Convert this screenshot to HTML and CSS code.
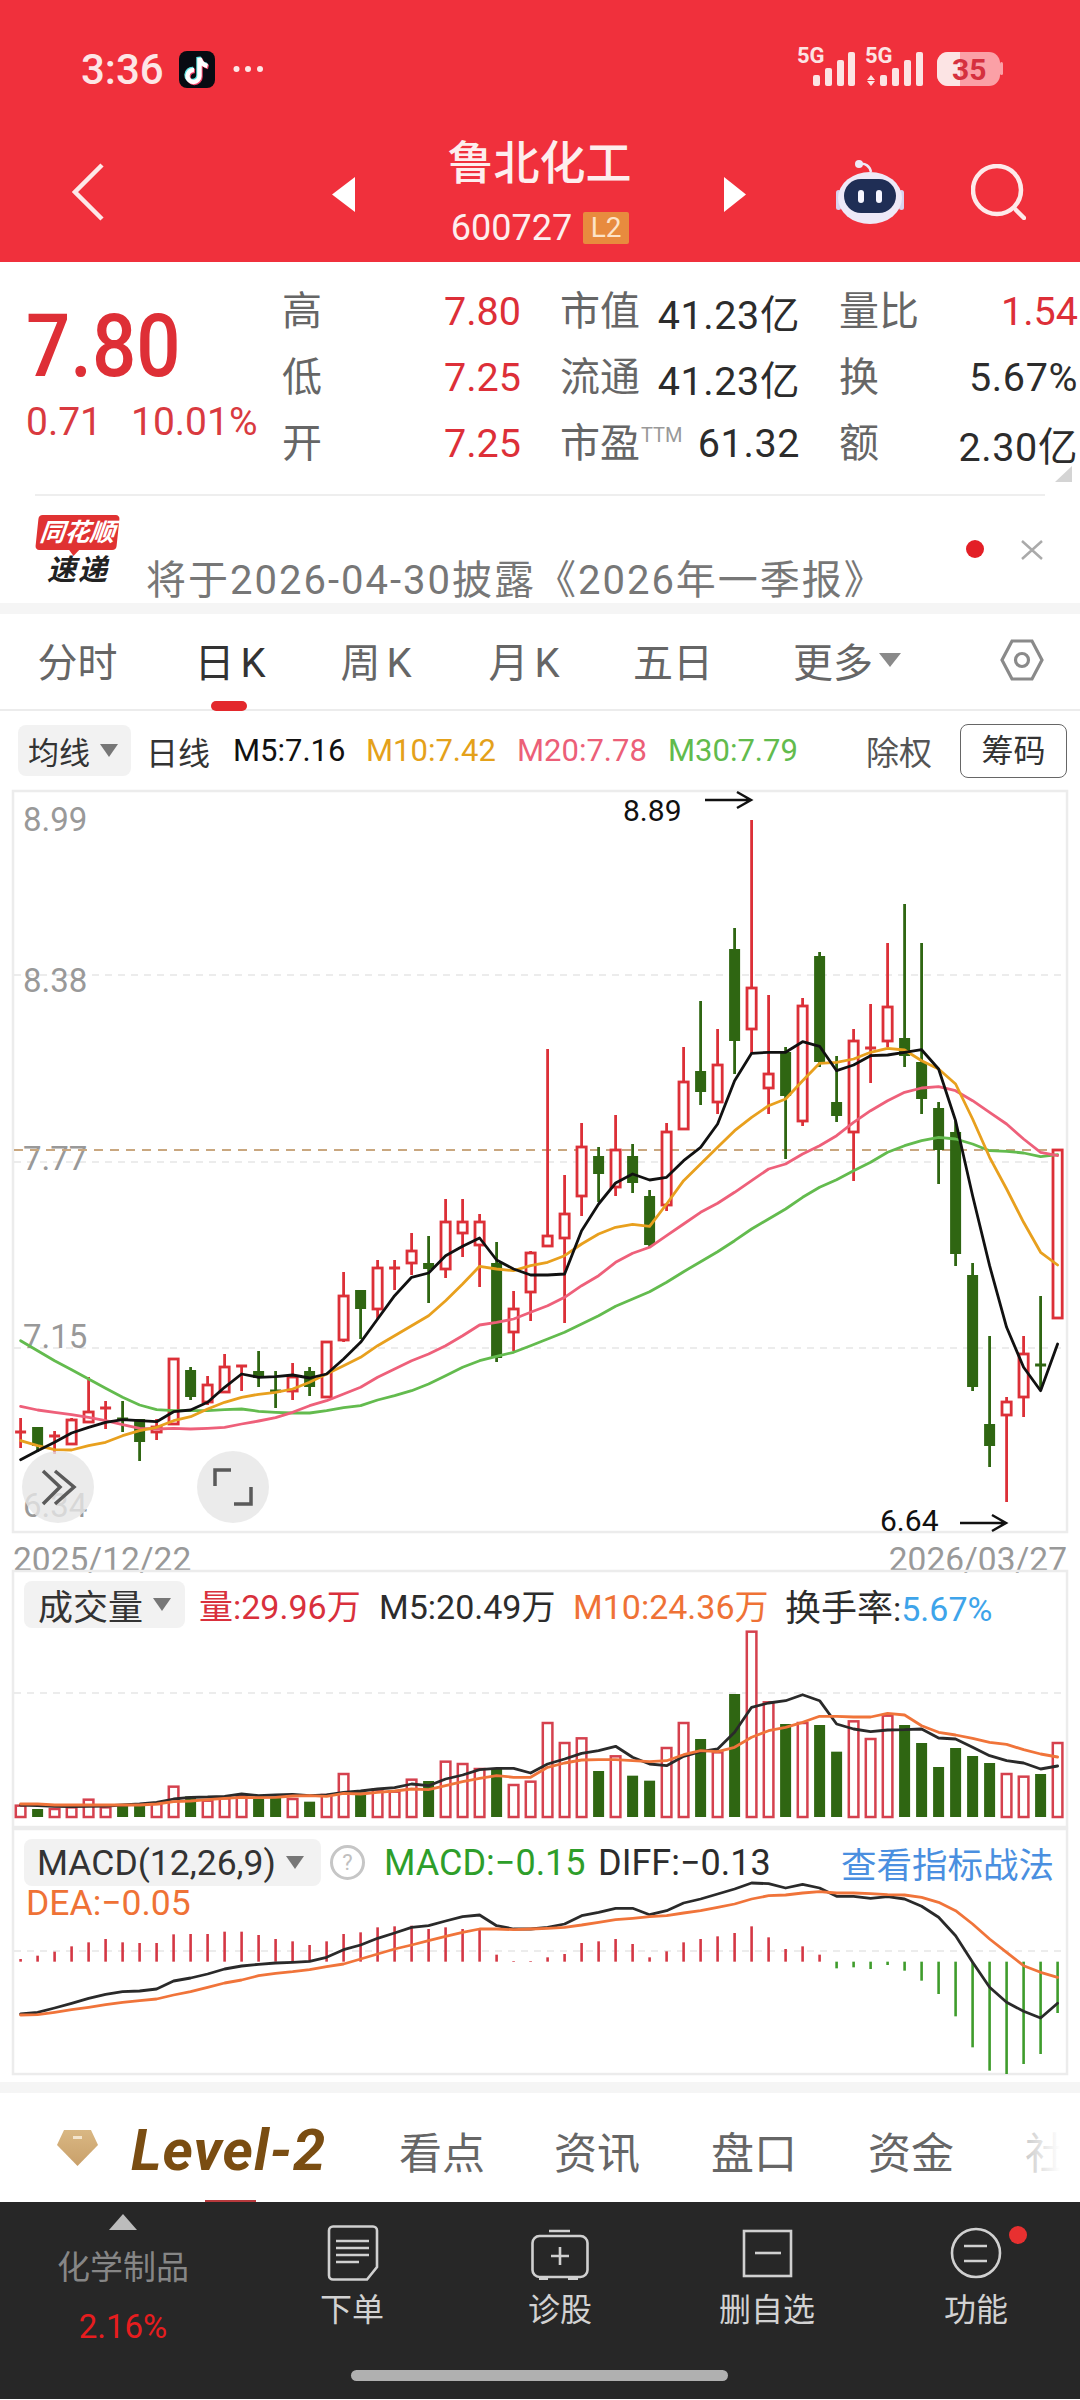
FILE: index.html
```html
<!DOCTYPE html>
<html lang="zh">
<head>
<meta charset="utf-8">
<title>鲁北化工</title>
<link rel="stylesheet" href="styles.css">
</head>
<body>
<div class="app">
  <header class="header">
    <div class="status">
      <span class="clock">3:36</span>
      <svg class="tiktok" viewBox="0 0 36 37">
        <rect width="36" height="37" rx="8" class="tt-bg"/>
        <path class="tt-c" d="M14 18a6 6 0 1 0 5.5 6V6c1 4 4 7 8 8"/>
        <path class="tt-r" d="M16 20a6 6 0 1 0 5.5 6V8c1 4 4 7 8 8"/>
        <path class="tt-w" d="M15 19a6 6 0 1 0 5.5 6V7c1 4 4 7 8 8"/>
      </svg>
      <svg class="dots" viewBox="0 0 30 8"><circle cx="3.5" cy="4" r="3"/><circle cx="15" cy="4" r="3"/><circle cx="27" cy="4" r="3"/></svg>
      <svg class="sysicons" viewBox="0 -8 208 57">
        <text x="0" y="16" class="net">5G</text>
        <rect x="16" y="28" width="7" height="11" rx="2"/><rect x="28" y="21" width="7" height="18" rx="2"/><rect x="40" y="13" width="7" height="26" rx="2"/><rect x="51" y="5" width="7" height="34" rx="2"/>
        <text x="68" y="16" class="net">5G</text>
        <path d="M74 28l4 5h-8zM74 39l4-5h-8z"/>
        <rect x="83" y="28" width="7" height="11" rx="2"/><rect x="95" y="21" width="7" height="18" rx="2"/><rect x="107" y="13" width="7" height="26" rx="2"/><rect x="119" y="5" width="7" height="34" rx="2"/>
        <rect x="140" y="5" width="63" height="34" rx="11" class="bat-rest"/>
        <path d="M151 5h12v34h-12a11 11 0 0 1-11-11V16a11 11 0 0 1 11-11z"/>
        <rect x="203" y="15" width="3" height="13" rx="1.5" class="bat-rest"/>
        <text x="155" y="33" class="bat-num">35</text>
      </svg>
    </div>
    <div class="nav">
      <svg class="back" viewBox="0 0 33 58"><polyline points="30,2 3,29 30,56"/></svg>
      <svg class="tri-l" viewBox="0 0 23 35"><polygon points="23,0 23,35 0,17.5"/></svg>
      <div class="title">
        <div class="name">鲁北化工</div>
        <div class="code"><span>600727</span><span class="l2">L2</span></div>
      </div>
      <svg class="tri-r" viewBox="0 0 22 35"><polygon points="0,0 22,17.5 0,35"/></svg>
      <svg class="robot" viewBox="0 0 68 64">
        <path class="ant" d="M24 4c5-1 10 2 11 8"/>
        <circle cx="23" cy="4" r="4" class="head"/>
        <rect x="0" y="30" width="5" height="20" rx="2.5" class="ear"/>
        <rect x="63" y="30" width="5" height="20" rx="2.5" class="ear"/>
        <ellipse cx="34" cy="38" rx="32" ry="26" class="head"/>
        <rect x="8" y="19" width="52" height="34" rx="17" class="visor"/>
        <rect x="22" y="30" width="6" height="13" rx="3" class="eye"/>
        <rect x="40" y="30" width="6" height="13" rx="3" class="eye"/>
      </svg>
      <svg class="search" viewBox="0 0 55 56"><circle cx="26" cy="26" r="24"/><line x1="45" y1="46" x2="53" y2="54"/></svg>
    </div>
  </header>

  <section class="quote">
    <div class="price">
      <div class="big">7.80</div>
      <div class="chg"><span class="chg-a">0.71</span><span>10.01%</span></div>
    </div>
    <div class="stats">
      <div class="cell"><span class="lab">高</span><span class="up">7.80</span></div>
      <div class="cell"><span class="lab">市值</span><span class="val">41.23亿</span></div>
      <div class="cell"><span class="lab">量比</span><span class="up">1.54</span></div>
      <div class="cell"><span class="lab">低</span><span class="up">7.25</span></div>
      <div class="cell"><span class="lab">流通</span><span class="val">41.23亿</span></div>
      <div class="cell"><span class="lab">换</span><span class="val">5.67%</span></div>
      <div class="cell"><span class="lab">开</span><span class="up">7.25</span></div>
      <div class="cell"><span class="lab">市盈<sup class="ttm">TTM</sup></span><span class="val">61.32</span></div>
      <div class="cell"><span class="lab">额</span><span class="val">2.30亿</span></div>
    </div>
    <i class="corner"></i>
  </section>

  <section class="ad">
    <div class="logo">
      <div class="bubble"><span>同花顺</span></div>
      <div class="sudi">速递</div>
    </div>
    <div class="ad-text">将于2026-04-30披露《2026年一季报》</div>
    <i class="ad-dot"></i>
    <svg class="ad-x" viewBox="0 0 22 20"><path d="M1 1l20 18M21 1L1 19"/></svg>
  </section>
  <div class="band"></div>

  <nav class="tabs">
    <span class="tab">分时</span>
    <span class="tab on">日 K</span>
    <span class="tab">周 K</span>
    <span class="tab">月 K</span>
    <span class="tab">五日</span>
    <span class="tab">更多<i class="caret caret-more"></i></span>
    <span class="tab tab-gear">
      <svg class="gear" viewBox="0 0 44 42"><polygon points="12,2 32,2 42,21 32,40 12,40 2,21"/><circle cx="22" cy="21" r="6.5"/></svg>
    </span>
  </nav>

  <div class="ma-row">
    <span class="pick pick-ma">均线<i class="caret"></i></span>
    <span class="ma w87 ma-d">日线</span>
    <span class="ma w133">M5:7.16</span>
    <span class="ma w151 c-or">M10:7.42</span>
    <span class="ma w152 c-pk">M20:7.78</span>
    <span class="ma m30 c-gr">M30:7.79</span>
    <span class="ma w94 ma-x">除权</span>
    <span class="chip">筹码</span>
  </div>

  <svg id="kline" class="chart kline" viewBox="0 791 1080 743"></svg>
  <div class="dates"><span>2025/12/22</span><span>2026/03/27</span></div>

  <section class="panel panel-vol">
    <svg id="vol" class="chart vol" viewBox="0 1571 1080 258"></svg>
    <div class="ph">
      <span class="pick pick-vol">成交量<i class="caret"></i></span>
      <span class="pi w180 c-rd">量:29.96万</span>
      <span class="pi w194">M5:20.49万</span>
      <span class="pi w213 c-om">M10:24.36万</span>
      <span class="pi"><span class="hsl">换手率</span>:<span class="c-bl">5.67%</span></span>
    </div>
  </section>

  <section class="panel panel-macd">
    <svg id="macd" class="chart macd" viewBox="0 1829 1080 247"></svg>
    <div class="ph">
      <span class="pick pick-macd">MACD(12,26,9)<i class="caret"></i></span>
      <span class="help">?</span>
      <span class="pi w214 c-dg ph-m">MACD:−0.15</span>
      <span class="pi ph-m">DIFF:−0.13</span>
      <span class="pi link">查看指标战法</span>
    </div>
    <div class="dea c-om">DEA:−0.05</div>
  </section>

  <div class="gap"></div>
  <div class="band band-2"></div>

  <nav class="tabs2">
    <svg class="gem" viewBox="0 0 41 36"><defs><linearGradient id="gemfill" x1="0" y1="0" x2="0" y2="1"><stop offset="0" stop-color="#d9b783"/><stop offset="1" stop-color="#c9a06a"/></linearGradient></defs><polygon points="7,0 34,0 41,15 20.5,36 0,15" fill="url(#gemfill)"/><rect x="16" y="6" width="9" height="3" class="gem-dash"/></svg>
    <span class="lv2">Level-2</span>
    <span class="t2 t2-a">看点</span>
    <span class="t2 t2-b">资讯</span>
    <span class="t2 t2-b">盘口</span>
    <span class="t2 t2-b">资金</span>
    <span class="t2 t2-c">社区</span>
    <i class="lv2-ind"></i>
    <i class="fade"></i>
  </nav>

  <footer class="bar">
    <div class="sector">
      <i class="sec-tri"></i>
      <div class="sec-name">化学制品</div>
      <div class="sec-pct">2.16%</div>
    </div>
    <div class="act">
      <svg class="act-ic" viewBox="0 0 64 56"><path d="M13 1.5H53a4 4 0 0 1 4 4V42L47 54.5H13a4 4 0 0 1-4-4V5.5a4 4 0 0 1 4-4Z"/><path d="M16 16H49M16 23H49M16 30H49M16 37H39"/></svg>
      <span class="act-t">下单</span>
    </div>
    <div class="act">
      <svg class="act-ic" viewBox="0 0 64 56"><rect x="4.5" y="11" width="55" height="41" rx="7"/><path d="M21 6H42M32 22V40M23 31H41"/><path class="act-fill" d="M11 52h9v3h-9zM40 52h10v3H40z"/></svg>
      <span class="act-t">诊股</span>
    </div>
    <div class="act">
      <svg class="act-ic" viewBox="0 0 64 56"><rect x="9" y="6" width="47" height="45"/><path d="M20 28H46"/></svg>
      <span class="act-t">删自选</span>
    </div>
    <div class="act">
      <svg class="act-ic" viewBox="0 0 64 56"><circle cx="32" cy="28" r="24"/><path d="M20 21H43M20 36H43"/></svg>
      <span class="act-t">功能</span>
      <i class="act-dot"></i>
    </div>
    <i class="home"></i>
  </footer>
</div>
<script src="chart.js"></script>
</body>
</html>
```
FILE: styles.css
```css
* { box-sizing: border-box; }
html, body { margin: 0; padding: 0; background: #fff; }
body { font-family: Roboto, "Noto Sans CJK SC", sans-serif; color: #333; }
.app { width: 1080px; height: 2400px; overflow: hidden; position: relative; }
i { display: block; font-style: normal; }
svg { display: block; flex: none; }

/* header */
.header { height: 262px; background: #f0303c; color: #fff; }
.status { height: 130px; display: flex; align-items: flex-start; padding: 39px 75px 0 81px; }
.clock { font-size: 42px; font-weight: 500; line-height: 48px; margin-top: 7px; color: #fde6e6; width: 98px; }
.tiktok { width: 36px; height: 37px; margin-top: 12px; }
.tt-bg { fill: #080b12; }
.tiktok path { fill: none; stroke-width: 4.4; }
.tt-c { stroke: #5fe6e6; }
.tt-r { stroke: #f2466a; }
.tt-w { stroke: #fff; }
.dots { width: 30px; height: 8px; margin: 26px 0 0 18px; fill: #fde6e6; }
.sysicons { width: 208px; height: 57px; margin-left: auto; fill: #fce4e4; }
.net { font-size: 22px; font-weight: 700; }
.bat-rest { fill: #fba0a6; }
.bat-num { font-size: 30px; font-weight: 700; fill: #d5303e; }

.nav { height: 132px; display: flex; align-items: center; padding-left: 72px; }
.back { width: 33px; height: 58px; margin: 0 227px 8px 0; fill: none; stroke: #fde8e8; stroke-width: 4.5; }
.tri-l { width: 23px; height: 35px; margin-bottom: 4px; fill: #fff; }
.tri-r { width: 22px; height: 35px; margin-bottom: 4px; fill: #fff; }
.title { width: 369px; text-align: center; align-self: flex-start; }
.name { font-size: 46px; line-height: 66px; font-weight: 500; color: #fdeeee; }
.code { display: flex; justify-content: center; align-items: center; height: 64px; font-size: 36px; color: #fdeeee; padding-left: 1px; }
.l2 { margin-left: 11px; width: 46px; height: 32px; background: #e88b3e; border-radius: 2px; font-size: 28px; line-height: 32px; color: #fde3c8; }
.robot { width: 68px; height: 64px; margin: 0 0 8px 90px; }
.robot .head { fill: #eee9f7; }
.robot .ear { fill: #d7d2ee; }
.robot .ant { fill: none; stroke: #eee9f7; stroke-width: 2.5; }
.robot .visor { fill: #1f2e55; }
.robot .eye { fill: #f6f6ff; }
.search { width: 55px; height: 56px; margin: 0 0 8px 67px; fill: none; stroke: #fdeaea; stroke-width: 4.5; stroke-linecap: round; }

/* quote */
.quote { height: 234px; display: flex; position: relative; margin: 0; padding-left: 26px; }
.quote::after { content: ""; position: absolute; left: 35px; right: 35px; bottom: 0; height: 2px; background: #eeeeee; }
.price { width: 256px; padding-top: 44px; color: #de2f36; }
.big { font-size: 78px; line-height: 82px; font-weight: 500; transform: scaleY(1.12); }
.chg { font-size: 39px; line-height: 44px; margin-top: 12px; display: flex; color: #d93a40; }
.chg-a { width: 105px; }
.stats { width: 796px; padding-top: 15px; display: grid; grid-template-columns: 239px 240px 239px; grid-auto-rows: 66px; column-gap: 39px; align-content: start; }
.cell { display: flex; justify-content: space-between; align-items: center; font-size: 39.5px; white-space: nowrap; }
.lab { font-size: 40px; color: #666; font-weight: 400; margin-bottom: 4px; }
.up { color: #dd2f38; margin-top: 2px; }
.val { color: #2c2c2c; margin-top: 2px; letter-spacing: .6px; }
.ttm { font-size: 20px; color: #999; vertical-align: 15px; line-height: 0; font-family: Roboto; margin-left: 1px; }
.corner { position: absolute; right: 8px; bottom: 14px; width: 0; height: 0; border-style: solid; border-width: 0 0 16px 17px; border-color: transparent transparent #d4d4d4 transparent; }

/* ad row */
.ad { height: 107px; display: flex; padding-left: 37px; align-items: flex-start; }
.logo { width: 109px; margin-top: 19px; flex: none; }
.bubble { width: 81px; height: 35px; background: #e03232; border-radius: 4px; transform: skewX(-6deg); position: relative; color: #fff; font-size: 25px; line-height: 35px; text-align: center; font-weight: 700; font-style: italic; }
.bubble::after { content: ""; position: absolute; left: 34px; bottom: -6px; width: 0; height: 0; border-style: solid; border-width: 6px 5px 0 5px; border-color: #e03232 transparent transparent transparent; }
.sudi { margin: 5px 0 0 10px; font-size: 29px; line-height: 30px; font-weight: 700; font-style: italic; color: #222; letter-spacing: 2px; }
.ad-text { margin-top: 63px; font-size: 40px; line-height: 44px; color: #777; white-space: nowrap; letter-spacing: 2px; }
.ad-dot { width: 18px; height: 18px; border-radius: 50%; background: #e31f26; position: absolute; left: 966px; top: 540px; }
.ad-x { width: 22px; height: 20px; position: absolute; left: 1021px; top: 540px; fill: none; stroke: #aaa; stroke-width: 2.5; }
.band { height: 11px; background: #f5f5f5; }

/* tabs */
.tabs { height: 97px; padding-bottom: 3px; border-bottom: 2px solid #ececec; display: grid; grid-template-columns: 155px 150px 142px 154px 144px 204px 131px; font-size: 40px; color: #666; }
.tab { display: flex; align-items: center; justify-content: center; position: relative; word-spacing: -4px; white-space: nowrap; }
.tab.on { color: #333; }
.tab.on::after { content: ""; position: absolute; left: 50%; margin-left: -19px; bottom: -5px; width: 36px; height: 10px; border-radius: 5px; background: #e3282c; }
.tab-gear { justify-content: flex-end; padding-right: 36px; }
.gear { width: 44px; height: 42px; fill: none; stroke: #8a8a8a; stroke-width: 3.2; }
.caret { display: inline-block; width: 0; height: 0; border-style: solid; border-width: 13px 9px 0 9px; border-color: #777 transparent transparent transparent; margin-left: 10px; flex: none; }
.caret-more { border-width: 14px 11px 0 11px; border-top-color: #8a8a8a; margin-left: 6px; }

/* MA row */
.ma-row { height: 79px; padding-left: 18px; display: flex; align-items: center; font-size: 31px; white-space: nowrap; color: #111; }
.pick { display: flex; align-items: center; background: #f2f2f2; border-radius: 8px; color: #333; flex: none; }
.pick-ma { width: 113px; height: 51px; margin-right: 15px; padding-left: 10px; font-size: 31px; }
.ma { flex: none; }
.w87 { width: 87px; } .w133 { width: 133px; } .w151 { width: 151px; } .w152 { width: 151px; } .m30 { width: 198px; } .w94 { width: 94px; }
.ma-d { color: #333; font-size: 32px; }
.ma-x { color: #555; font-size: 33px; }
.chip { width: 107px; height: 54px; border: 1.5px solid #666; border-radius: 8px; text-align: center; font-size: 32px; line-height: 52px; color: #333; flex: none; }
.c-or { color: #e4a11a; } .c-pk { color: #ec5f78; } .c-gr { color: #62bb4d; }
.c-rd { color: #d9303c; } .c-om { color: #ef7236; } .c-bl { color: #3ea4ea; } .c-dg { color: #2e9e2a; }

/* charts */
.chart { width: 1080px; overflow: visible; }
.kline { height: 743px; }
.vol { height: 258px; }
.macd { height: 247px; }
.frame { fill: none; stroke: #ececec; stroke-width: 2.5; }
.grid { stroke: #e6e6e6; stroke-width: 1.5; stroke-dasharray: 7 6; }
.last { stroke: #c9a77f; stroke-width: 1.8; stroke-dasharray: 9 7; }
.ylab { font-size: 33px; fill: #999; }
.mark { font-size: 30px; fill: #111; }
.arrow { fill: none; stroke: #111; stroke-width: 2.5; }
.wick-r { stroke: #dc3038; stroke-width: 2.8; }
.wick-g { stroke: #2f6612; stroke-width: 2.8; }
.body-r { fill: #fff; stroke: #dc3038; stroke-width: 2.8; }
.body-g { fill: #2f6612; }
.fill-r { fill: #dc3038; }
.line { fill: none; stroke-width: 2.8; stroke-linejoin: round; stroke-linecap: round; }
.l-k { stroke: #111; }
.l-o { stroke: #e8a01e; }
.l-p { stroke: #ee607a; }
.l-g { stroke: #63bb4e; }
.l-d { stroke: #2a2a2a; }
.l-m { stroke: #f0743a; }
.vbar-r { fill: #fff; stroke: #d5414e; stroke-width: 2.5; }
.vbar-g { fill: #2f6612; }
.hist-r { stroke: #d43744; stroke-width: 2.6; }
.hist-g { stroke: #3f9c2c; stroke-width: 2.6; }
.fab { fill: #e6e6e6; fill-opacity: .8; }
.fab-ic { fill: none; stroke: #5a5a5a; stroke-width: 3.5; }

.dates { height: 37px; display: flex; justify-content: space-between; padding: 10px 13px 0; font-size: 33.5px; line-height: 33px; color: #999; }

.panel { position: relative; }
.panel-macd { height: 247px; }
.panel-vol { height: 258px; }
.ph { position: absolute; left: 24px; top: 11px; width: 1030px; display: flex; align-items: center; height: 47px; font-size: 34px; white-space: nowrap; color: #2c2c2c; }
.pi { flex: none; }
.hsl { font-size: 36px; }
.pick-vol { width: 161px; height: 47px; margin-right: 14px; padding-left: 14px; font-size: 35px; }
.pick-macd { width: 297px; height: 47px; padding-left: 13px; font-size: 35.5px; }
.w180 { width: 180px; } .w194 { width: 194px; } .w213 { width: 212px; } .w214 { width: 214px; }
.ph-m { font-size: 36px; }
.help { width: 35px; height: 35px; border: 3px solid #c6c6c6; border-radius: 50%; margin: 0 19px 0 9px; text-align: center; font-size: 22px; line-height: 29px; color: #c0c0c0; flex: none; }
.link { margin-left: auto; font-size: 35.5px; color: #4a8fe0; }
.dea { position: absolute; left: 26px; top: 59px; font-size: 35.5px; line-height: 32px; }

.gap { height: 7px; }
.band-2 { height: 11px; }

/* lower tabs */
.tabs2 { height: 109px; position: relative; display: flex; align-items: center; padding: 4px 0 0 57px; white-space: nowrap; overflow: hidden; }
.gem { width: 41px; height: 36px; margin: 0 33px 4px 0; }
.gem-dash { fill: #f3e4cc; }
.lv2 { font-size: 58px; font-weight: 700; font-style: italic; color: #7a4d12; width: 268px; letter-spacing: 1px; flex: none; }
.t2 { font-size: 43px; color: #666; flex: none; }
.t2-a { width: 155px; } .t2-b { width: 157px; }
.t2-c { color: #777; }
.fade { position: absolute; right: 0; top: 0; bottom: 0; width: 80px; background: linear-gradient(to right, rgba(255,255,255,.35), #fff 75%); }
.lv2-ind { position: absolute; left: 205px; bottom: 0; width: 51px; height: 2px; background: #b8393c; }

/* bottom bar */
.bar { height: 197px; background: #272727; position: relative; display: grid; grid-template-columns: 246px 212px 204px 210px 208px; }
.sector { display: flex; flex-direction: column; align-items: center; padding-top: 12px; }
.sec-tri { width: 0; height: 0; border-style: solid; border-width: 0 14px 16px 14px; border-color: transparent transparent #bcbcbc transparent; }
.sec-name { margin-top: 19px; font-size: 33px; line-height: 38px; color: #868686; }
.sec-pct { margin-top: 21px; font-size: 33px; line-height: 38px; color: #e71d1f; }
.act { position: relative; display: flex; flex-direction: column; align-items: center; padding-top: 23px; }
.act-ic { width: 64px; height: 56px; fill: none; stroke: #d0d0d0; stroke-width: 2.6; }
.act-fill { fill: #d0d0d0; stroke: none; }
.act-t { margin-top: 10px; font-size: 32px; line-height: 38px; color: #d2d2d2; }
.act-dot { position: absolute; left: 137px; top: 24px; width: 18px; height: 18px; border-radius: 50%; background: #e83030; }
.home { position: absolute; left: 351px; top: 168px; width: 377px; height: 11px; border-radius: 6px; background: #b0b0b0; }
```
FILE: chart.js
```js
// Daily K-line data, sampled in page pixels. Each series has one value per session.
var STEP = 17, X0 = 20.6;
function X(i) { return X0 + STEP * i; }
function el(svg, tag, cls, attrs, text) {
  var n = document.createElementNS('http://www.w3.org/2000/svg', tag);
  if (cls) n.setAttribute('class', cls);
  for (var k in attrs) n.setAttribute(k, attrs[k]);
  if (text) n.textContent = text;
  svg.appendChild(n);
  return n;
}
// values were read off at 3x from a given page y origin
function at(base, arr) { return arr.map(function (v) { return base + v / 3; }); }

// r/g, wick top, body top, body bottom, wick bottom
var K = [
['r',1419,1433,1433,1449],['g',1428,1428,1447,1453],['r',1432,1437,1437,1455],['r',1419,1421,1445,1446],
['r',1378,1413,1423,1424],['r',1402,1409,1409,1430],['g',1402,1420,1420,1433],['g',1420,1420,1443,1462],
['r',1420,1428,1433,1441],['r',1359,1360,1425,1425],['g',1368,1371,1398,1401],['r',1377,1386,1403,1406],
['r',1355,1368,1393,1394],['r',1367,1367,1367,1392],['g',1352,1372,1379,1388],['g',1372,1392,1392,1409],
['r',1364,1378,1392,1401],['g',1368,1372,1388,1397],['r',1343,1343,1398,1398],['r',1273,1297,1341,1343],
['g',1291,1291,1310,1340],['r',1261,1269,1310,1320],['r',1261,1269,1269,1291],['r',1234,1252,1264,1276],
['g',1237,1264,1270,1304],['r',1200,1223,1270,1279],['r',1200,1223,1234,1258],['r',1215,1223,1246,1288],
['g',1243,1264,1359,1363],['r',1292,1310,1333,1352],['r',1252,1254,1293,1322],['r',1050,1237,1247,1248],
['r',1176,1215,1239,1324],['r',1124,1148,1197,1217],['g',1148,1157,1175,1203],['r',1116,1151,1188,1197],
['g',1145,1157,1184,1194],['g',1191,1197,1246,1248],['r',1124,1133,1206,1212],['r',1048,1083,1130,1130],
['g',1002,1072,1093,1106],['r',1030,1066,1103,1115],['g',929,950,1042,1075],['r',821,989,1030,1055],
['r',996,1075,1089,1115],['g',1048,1053,1097,1160],['r',999,1007,1122,1127],['g',953,957,1063,1068],
['g',1057,1103,1117,1123],['r',1030,1042,1133,1182],['r',1005,1049,1049,1084],['r',944,1008,1042,1048],
['g',905,1039,1057,1068],['g',944,1063,1100,1115],['g',1103,1109,1151,1185],['g',1122,1133,1255,1267],
['g',1264,1276,1388,1392],['g',1337,1425,1447,1468],['r',1398,1403,1416,1503],['r',1337,1355,1398,1418],
['g',1297,1366,1366,1392],['r',1151,1151,1319,1319]
];

var MA5 = at(1120,[1022,995,970,942,925,910,902,905,908,878,873,850,805,765,775,773,768,777,765,720,670,600,530,475,462,410,382,357,423,450,468,
  468,465,335,255,192,165,183,175,125,85,15])
  .concat(at(720,[1085,1003,1000,1000,968,982,1055,1038,1010,1008,1000,992,1050]))
  .concat(at(1120,[5,230,440,625,745,815,675]));
var MA10 = at(1120,[965,980,992,993,980,970,950,935,925,905,893,870,850,835,826,820,810,790,765,740,715,680,650,620,590,545,495,442,450,455,440,
  430,410,375,345,325,316,322,255,185,135,85,35])
  .concat(at(720,[1195,1160,1140,1085,1033,1030,1020,1000,988,993,1025,1050,1095,1200]))
  .concat(at(1120,[115,210,310,400,438]));
var MA20 = at(1120,[862,873,880,887,895,905,917,928,930,928,930,928,925,915,906,896,880,860,845,825,805,775,750,725,705,680,650,618,610,600,580,
  560,535,500,470,430,403,385,350,315,280,253,220,185,150,135,105,80,50,10])
  .concat(at(720,[1175,1145,1120,1107,1103,1115,1145,1180]))
  .concat(at(1120,[15,60,100,110]));
var MA30 = at(1120,[665,695,725,752,780,808,835,858,872,875,875,875,872,870,877,880,882,882,875,866,860,843,830,815,795,770,745,725,712,700,680,
  660,640,615,590,562,540,518,490,458,428,398,365,330,300,270,235,205,182,155,130,100,80,65,55,60,75,95,97,102,113,107]);

var VOL = at(1560,[740,750,750,745,722,745,740,740,735,683,712,725,718,712,720,717,720,728,708,645,700,692,698,662,666,608,615,630,630,678,668,
  492,552,538,636,592,650,665,567,492,540,580,405,218,430,495,492,498,578,487,540,470,498,552,624,567,591,612,645,653,645,552]);
var VM5 = at(1560,[738,740,742,743,742,741,738,735,730,720,715,714,712,705,710,708,706,710,708,700,696,690,686,675,680,660,648,632,628,628,642,
  615,600,583,575,562,595,615,620,592,578,570,520,445,432,425,407,425,495,510,518,513,512,510,537,540,565,590,605,612,630,621]);
var VM10 = at(1560,[735,735,738,738,738,738,738,738,735,728,726,722,718,715,716,715,711,710,712,703,705,700,696,690,692,680,668,658,650,655,655,
  625,612,603,602,602,605,608,605,587,575,578,565,535,515,505,490,472,472,474,474,463,468,500,520,528,538,550,556,572,585,594]);

var HIST = at(1560,[1200,1190,1178,1162,1150,1140,1150,1152,1152,1126,1125,1125,1118,1118,1128,1140,1147,1158,1147,1125,1120,1105,1102,1100,1110,1105,1110,1110,1187,1206,1206,
  1195,1185,1152,1147,1140,1155,1195,1177,1150,1140,1132,1122,1102,1135,1170,1162,1187,1228,1225,1230,1218,1235,1265,1305,1372,1465,1535,1545,1515,1485,1362]);
var HIST0 = 1560 + 1208 / 3;
var DIFF = at(1560,[1365,1360,1347,1333,1318,1306,1298,1296,1290,1266,1257,1245,1230,1221,1216,1212,1210,1207,1195,1172,1158,1138,1122,1105,1100,1086,1073,1068,1100,1110,1110,
  1105,1095,1070,1060,1048,1048,1067,1055,1032,1020,1005,990,972,974,987,976,987,1012,1012,1018,1013,1020,1042,1075,1130,1210,1285,1330,1357,1377,1333]);
var DEA = at(1560,[1368,1367,1360,1352,1345,1337,1330,1325,1320,1308,1298,1285,1272,1263,1250,1243,1238,1232,1223,1215,1200,1185,1170,1158,1145,1132,1120,1110,1110,1112,1110,
  1108,1105,1098,1090,1082,1078,1073,1070,1062,1055,1045,1035,1020,1010,1008,1002,998,1002,1002,1004,1007,1008,1015,1030,1055,1095,1140,1180,1220,1240,1255]);

function poly(svg, ys, cls) {
  el(svg, 'polyline', 'line ' + cls, { points: ys.map(function (y, i) { return X(i) + ',' + y.toFixed(1); }).join(' ') });
}
function hline(svg, y, cls) {
  el(svg, 'line', cls, { x1: 14, x2: 1066, y1: y, y2: y });
}

// K-line
(function () {
  var s = document.getElementById('kline');
  el(s, 'rect', 'frame', { x: 13, y: 792, width: 1054, height: 741 });
  [976, 1163, 1349].forEach(function (y) { hline(s, y, 'grid'); });
  [['8.99', 832], ['8.38', 993], ['7.77', 1171], ['7.15', 1349], ['6.34', 1518]].forEach(function (t) {
    el(s, 'text', 'ylab', { x: 23, y: t[1] }, t[0]);
  });
  hline(s, 1151, 'last');
  K.forEach(function (c, i) {
    var x = X(i), kind = c[0];
    el(s, 'line', 'wick-' + kind, { x1: x, x2: x, y1: c[1], y2: c[4] });
    if (c[2] === c[3]) {
      el(s, 'rect', kind === 'r' ? 'fill-r' : 'body-g', { x: x - 5.5, y: c[2] - 1.5, width: 11, height: 3 });
    } else if (kind === 'r') {
      el(s, 'rect', 'body-r', { x: x - 4.6, y: c[2], width: 9.2, height: c[3] - c[2] });
    } else {
      el(s, 'rect', 'body-g', { x: x - 5.5, y: c[2], width: 11, height: c[3] - c[2] });
    }
  });
  poly(s, MA30, 'l-g');
  poly(s, MA20, 'l-p');
  poly(s, MA10, 'l-o');
  poly(s, MA5, 'l-k');
  el(s, 'text', 'mark', { x: 623, y: 822 }, '8.89');
  el(s, 'path', 'arrow', { d: 'M705 801H751M737 793L751 801L737 809' });
  el(s, 'text', 'mark', { x: 880, y: 1532 }, '6.64');
  el(s, 'path', 'arrow', { d: 'M960 1524H1006M992 1516L1006 1524L992 1532' });
  el(s, 'circle', 'fab', { cx: 58, cy: 1488, r: 36 });
  el(s, 'path', 'fab-ic', { d: 'M43 1472L60 1488L43 1505M55 1472L74 1488L55 1505' });
  el(s, 'circle', 'fab', { cx: 233, cy: 1488, r: 36 });
  el(s, 'path', 'fab-ic', { d: 'M215 1487V1471H231M251 1488V1505H234' });
})();

// Volume
(function () {
  var s = document.getElementById('vol');
  el(s, 'rect', 'frame', { x: 13, y: 1572, width: 1054, height: 256 });
  hline(s, 1694, 'grid');
  var base = 1818;
  VOL.forEach(function (y, i) {
    var x = X(i);
    if (K[i][0] === 'r') el(s, 'rect', 'vbar-r', { x: x - 4.8, y: y, width: 9.6, height: base - y });
    else el(s, 'rect', 'vbar-g', { x: x - 5.5, y: y, width: 11, height: base - y });
  });
  poly(s, VM5, 'l-d');
  poly(s, VM10, 'l-m');
})();

// MACD
(function () {
  var s = document.getElementById('macd');
  el(s, 'rect', 'frame', { x: 13, y: 1830, width: 1054, height: 245 });
  hline(s, 1952, 'grid');
  HIST.forEach(function (y, i) {
    el(s, 'line', y < HIST0 ? 'hist-r' : 'hist-g', { x1: X(i), x2: X(i), y1: y, y2: HIST0 });
  });
  poly(s, DIFF, 'l-d');
  poly(s, DEA, 'l-m');
})();
```
